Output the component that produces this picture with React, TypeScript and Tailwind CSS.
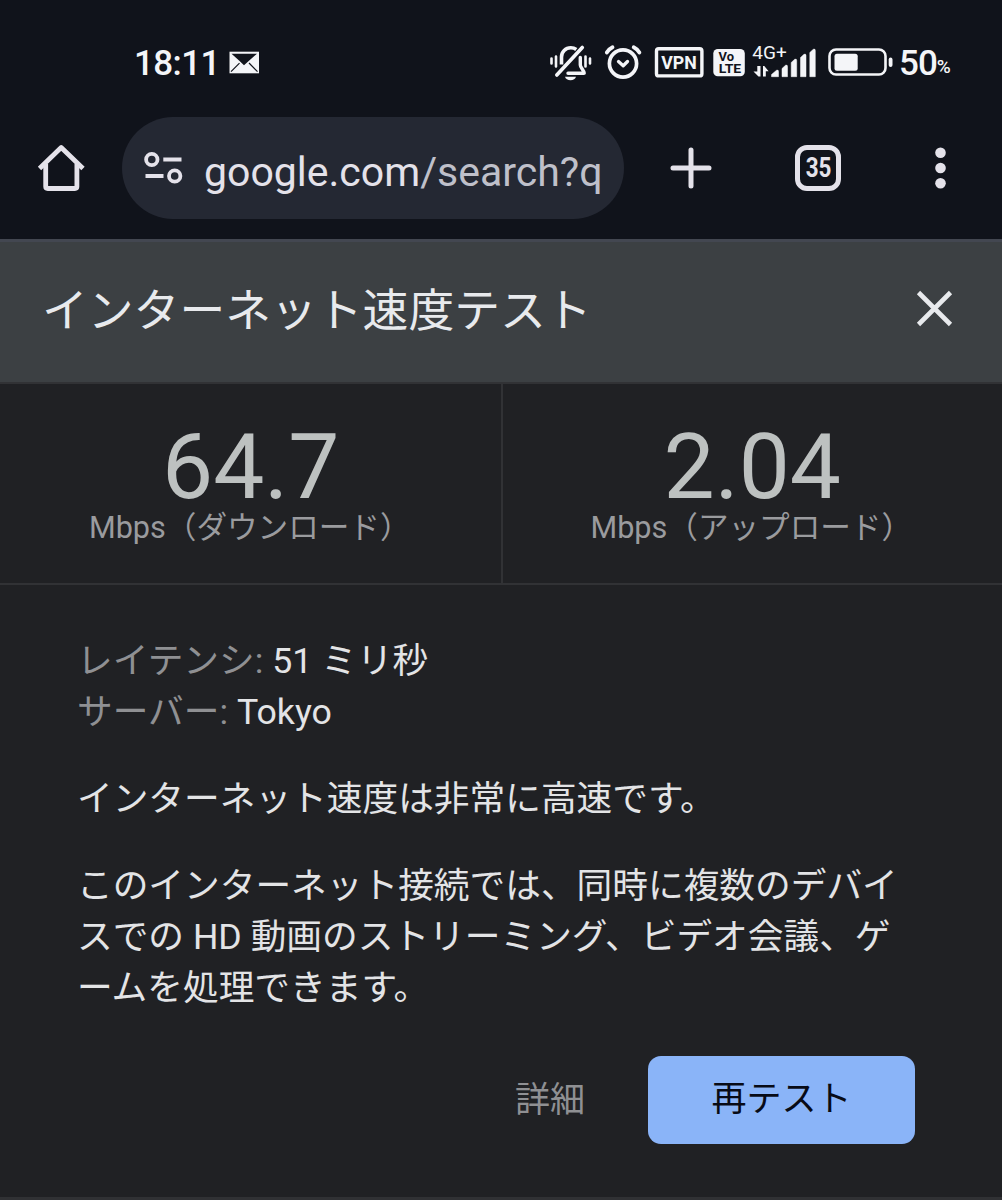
import type { ReactNode } from 'react';

function StatusBar() {
  return (
    <div className="flex h-[117px] items-start whitespace-nowrap pt-[43px] font-medium text-[#f4f5f8]">
      <span className="ml-[134px] w-[95px] text-[35px] leading-[41px] tracking-[-0.6px]">18:11</span>
      <svg className="mt-[8px]" width="31" height="23" viewBox="0 0 31 23">
        <rect x="0.5" y="0.7" width="29.5" height="21.6" fill="#f4f5f8" />
        <path d="M2.500 2.700h25.500l-8 7-5 4.600-4.700-4.600z" fill="#11141c" />
        <path d="M2 20.700l8.500-8.500M28.500 20.700L20 12" stroke="#11141c" strokeWidth="1.200" />
      </svg>
      <svg className="ml-[290px]" width="196" height="40" viewBox="550 43 196 40" fill="none" stroke="#f4f5f8" strokeLinecap="round">
        <path d="M551.500 58.500v5M556 56.500v10M585.500 56.500v10M590 58.500v5" strokeWidth="2.600" />
        <path d="M561.500 64.500V57c0-5.300 4-9.200 9.300-9.200 2.200 0 4 .6 5.500 1.700" strokeWidth="3.600" strokeLinecap="butt" />
        <path d="M580.300 57.500v7.500c0 2.600 3.300 4.800 3.900 8.200H568" strokeWidth="3.400" strokeLinejoin="round" />
        <path d="M582.300 47.500L556.800 75" strokeWidth="3.600" />
        <path d="M565 76.800h11c-.6 2.200-2.700 3.500-5.500 3.500s-4.900-1.300-5.500-3.500z" fill="#f4f5f8" stroke="none" />
        <circle cx="623" cy="63.500" r="13.600" strokeWidth="3.700" />
        <path d="M606.800 52.500c1.300-2.300 3.200-4 5.700-5.200M633.700 47.300c2.500 1.200 4.400 2.900 5.700 5.200" strokeWidth="3.800" />
        <path d="M618.500 61.500l4.700 4.200 4.300-4.200" strokeWidth="3.300" strokeLinejoin="round" />
        <rect x="656.500" y="48.700" width="45.400" height="27.200" rx="2.200" strokeWidth="3.400" />
        <rect x="713.300" y="49" width="31.500" height="27.200" rx="4.500" fill="#f4f5f8" stroke="none" />
        <g stroke="none" fontFamily="Roboto, sans-serif" fontWeight="700">
          <text x="661.300" y="69.200" fontSize="19" textLength="35.500" lengthAdjust="spacingAndGlyphs" fill="#f4f5f8">VPN</text>
          <g fill="#11141c">
            <text x="718.500" y="61.300" fontSize="12.500" textLength="15.500" lengthAdjust="spacingAndGlyphs">Vo</text>
            <text x="718.700" y="73" fontSize="12.500" textLength="22.500" lengthAdjust="spacingAndGlyphs">LTE</text>
          </g>
        </g>
      </svg>
      <svg className="ml-[6px]" width="142" height="40" viewBox="752 43 142 40" fill="#f4f5f8">
        <text x="752.300" y="59.300" fontFamily="Roboto, sans-serif" fontWeight="400" fontSize="18.300" textLength="34.500" lengthAdjust="spacingAndGlyphs">4G+</text>
        <path d="M757.300 66v5.500H753.500l5 5h2V66zM763 76.500V66h1.300l4.300 5.200h-2.800v5.300z" />
        <path d="M771.500 76.700v-2.200l5-4.200q2-.8 2 1.200v5.200zM782 76.700v-8.200l3.500-3.200q2-.8 2 1.200v10.200zM791.200 76.700V62.500l3.500-3.200q2-.8 2 1.200v16.200zM800.500 76.700V57.500l3.500-3.200q2-.8 2 1.200v21.200zM809.800 76.700V52.500l3.500-3.200q2-.8 2 1.200v26.200z" stroke="#f4f5f8" strokeWidth=".5" strokeLinejoin="round" />
        <rect x="829.500" y="49.500" width="56" height="25" rx="6.500" fill="none" stroke="#f4f5f8" strokeWidth="2.600" />
        <rect x="834.500" y="53.700" width="23.200" height="17" rx="2.500" />
        <rect x="888.700" y="57.500" width="3.800" height="9.500" rx="1.900" />
      </svg>
      <span className="ml-[5px] text-[35px] leading-[41px] tracking-[-1px]">50</span>
      <span className="pt-[10px] text-[19px] leading-[28px]">%</span>
    </div>
  );
}

function BrowserBar() {
  return (
    <div className="flex h-[122px] items-start text-[#e4e2ea]">
      <svg className="ml-[36px] mt-[25px]" width="50" height="54" viewBox="36 142 50 54" fill="none" stroke="currentColor" strokeWidth="4.800" strokeLinejoin="round">
        <path d="M45.700 164v22.500q0 2 2 2h27.200q2 0 2-2V164" />
        <path d="M39.500 168.500L61.200 147.500 83 168.500" />
      </svg>
      <div className="ml-[36px] flex h-[102px] w-[502px] items-start rounded-full bg-[#242833]">
        <svg className="ml-[21px] mt-[33px]" width="42" height="36" viewBox="143 150 42 36" fill="none" stroke="currentColor" strokeWidth="3.800">
          <circle cx="151.800" cy="159.500" r="5.700" />
          <path d="M163.300 159.500H181.500M145.500 176h18" />
          <circle cx="174.700" cy="176" r="5.700" />
        </svg>
        <span className="ml-[19px] mt-[31px] whitespace-nowrap text-[41px] leading-[48px]">
          google.com<span className="text-[#bfc0ca]">/search?q</span>
        </span>
      </div>
      <svg className="ml-[46px] mt-[30px]" width="42" height="42" viewBox="0 0 42 42" fill="none" stroke="currentColor" strokeWidth="5" strokeLinecap="round">
        <path d="M21 3v36M3 21h36" />
      </svg>
      <div className="ml-[83px] mt-[28px] flex h-[46px] w-[46px] items-center justify-center rounded-[12px] border-[5px] border-current text-[27px] font-bold leading-none">
        <span className="scale-x-[.83]">35</span>
      </div>
      <svg className="ml-[94px] mt-[30px]" width="11" height="42" viewBox="0 0 11 42" fill="currentColor">
        <circle cx="5.500" cy="5.700" r="5.300" />
        <circle cx="5.500" cy="21" r="5.300" />
        <circle cx="5.500" cy="36.300" r="5.300" />
      </svg>
    </div>
  );
}

function Metric({ value, label }: { value: string; label: string }) {
  return (
    <div className="flex flex-1 flex-col items-center whitespace-nowrap pt-[43px]">
      <span className="text-[91px] leading-[80px] text-[#bdc1c0]">{value}</span>
      <span className="mr-[2px] mt-[4px] text-[30.600px] leading-[34px] text-[#9a9b9e]">{label}</span>
    </div>
  );
}

function Detail({ label, children }: { label: string; children: ReactNode }) {
  return (
    <p>
      <span className="text-[#8f9093]">{label}:</span> {children}
    </p>
  );
}

export default function App() {
  return (
    <div className="flex h-[1200px] w-[1002px] flex-col overflow-hidden bg-[#202124] font-['Roboto','Noto_Sans_CJK_JP',sans-serif]" lang="ja">
      <header className="bg-[#10131b]">
        <StatusBar />
        <BrowserBar />
      </header>
      <div className="flex h-[143px] items-start justify-between border-t-[3px] border-[#434751] bg-[#3c4043] pl-[42px] pr-[49px] text-[#e8eaed]">
        <h1 className="mt-[37px] whitespace-nowrap text-[45.800px] leading-[66px]">インターネット速度テスト</h1>
        <svg className="mt-[48px]" width="37" height="37" viewBox="0 0 37 37" stroke="currentColor" strokeWidth="4.600">
          <path d="M2.500 2.500l32 32M34.500 2.500l-32 32" />
        </svg>
      </div>
      <section className="flex h-[203px] border-y-2 border-[#313235] pl-px">
        <Metric value="64.7" label="Mbps（ダウンロード）" />
        <div className="w-[2px] bg-[#313235]" />
        <Metric value="2.04" label="Mbps（アップロード）" />
      </section>
      <main className="flex flex-col whitespace-nowrap px-[77px] pt-[51px] text-[35.700px] leading-[51px] text-[#e3e4e6]">
        <Detail label="レイテンシ">51 ミリ秒</Detail>
        <Detail label="サーバー">Tokyo</Detail>
        <p className="mt-[36px]">インターネット速度は非常に高速です。</p>
        <p className="mt-[36px]">
          このインターネット接続では、同時に複数のデバイ
          <br />
          スでの HD 動画のストリーミング、ビデオ会議、ゲ
          <br />
          ームを処理できます。
        </p>
      </main>
      <footer className="mt-[42px] flex h-[88px] items-start justify-end pr-[87px] text-[35px] leading-[51px]">
        <button className="mr-[63px] mt-[19px] text-[#8f9093]">詳細</button>
        <button className="flex h-[88px] w-[267px] items-start justify-center rounded-[13px] bg-[#8ab4f8] pt-[18px] text-[#080b16]">再テスト</button>
      </footer>
      <div className="mt-auto h-[3px] shrink-0 bg-[#303134]" />
    </div>
  );
}
